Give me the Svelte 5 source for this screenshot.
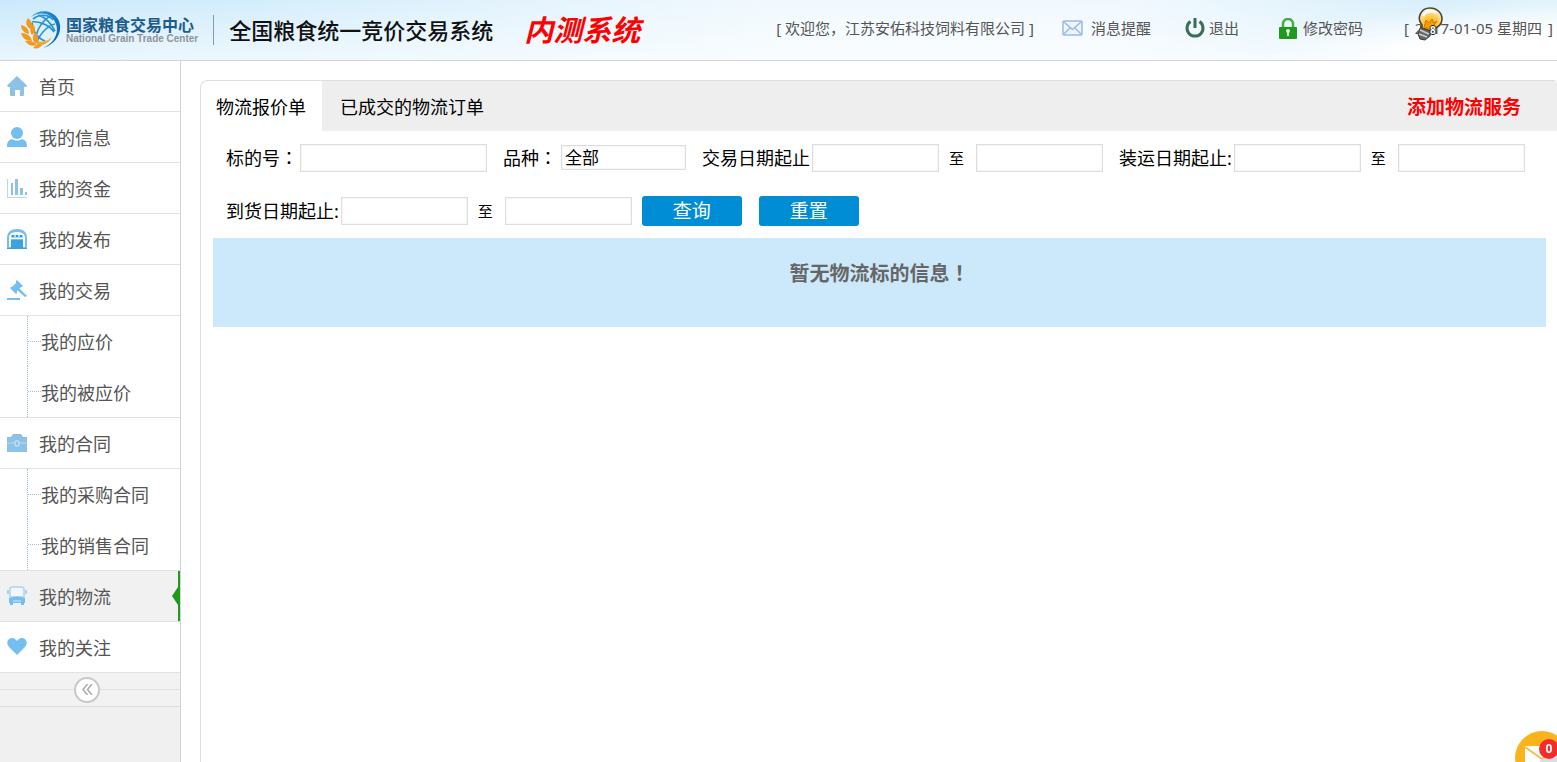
<script>
  let current = '我的物流';
  let tab = 0;
  let collapsed = false;
  let kind = '全部';

  const tabs = ['物流报价单', '已成交的物流订单'];
  const menu = [
    { name: '首页', icon: 'home' },
    { name: '我的信息', icon: 'user' },
    { name: '我的资金', icon: 'chart' },
    { name: '我的发布', icon: 'store' },
    { name: '我的交易', icon: 'gavel', children: ['我的应价', '我的被应价'] },
    { name: '我的合同', icon: 'bag', children: ['我的采购合同', '我的销售合同'] },
    { name: '我的物流', icon: 'bus' },
    { name: '我的关注', icon: 'heart' }
  ];

  const select = (name) => {
    current = name;
  }
</script>

<header>
  <a class="logo" href="#home">
    <svg width="42" height="40" viewBox="0 0 42 40">
      <defs>
        <linearGradient id="ring" x1="0" y1="0" x2="1" y2="1">
          <stop offset="0" stop-color="#2aa0dd" />
          <stop offset="1" stop-color="#0a5ca8" />
        </linearGradient>
      </defs>
      <path d="M11 7C18-1 32-1 38 9c6 11-1 25-15 29 12-5 17-17 12-26C31 3 20 1 11 7z" fill="url(#ring)" />
      <path d="M13 9c6-5 16-5 20 1M18 5c7 2 14 9 17 16M12 12c5-1 17 2 22 10M31 6c-7 3-14 12-15 22M35 14c-6 1-15 9-18 18M12 13c0 7 5 15 13 18" fill="none" stroke="#2a94d4" stroke-width="1.7" />
      <path d="M17 31c5 2 11 0 15-4-3 6-9 9-15 8z" fill="#f6a623" />
      <g fill="#f39a1c">
        <path d="M8 8c4 3 5 7 2 11C6 16 5 12 8 8z" />
        <path d="M1 15c5 1 8 4 8 9-5-1-8-4-8-9z" />
        <path d="M13 14c3 4 3 8-1 11-3-4-2-8 1-11z" />
        <path d="M1 23c6 0 10 3 11 8-6 0-10-3-11-8z" />
        <path d="M15 22c4 4 4 8 1 12-4-3-4-8-1-12z" />
        <path d="M5 31c5-1 9 0 12 4-5 2-9 0-12-4z" />
        <path d="M13 38c2-3 5-4 9-3-2 3-5 4-9 3z" />
      </g>
    </svg>
    <span class="brand">
      <b>国家粮食交易中心</b>
      <small>National Grain Trade Center</small>
    </span>
  </a>
  <h1>全国粮食统一竞价交易系统</h1>
  <em class="beta">内测系统</em>

  <div class="tools">
    <span>[ 欢迎您，江苏安佑科技饲料有限公司 ]</span>
    <a class="message" href="#message">
      <svg width="21" height="16" viewBox="0 0 21 16" fill="none" stroke="#9db9e6" stroke-width="1.5">
        <rect x="1" y="1" width="19" height="14" rx="1" fill="#eef5fe" />
        <path d="M2 2l8.500 7.500L19 2M2 14l6-6M19 14l-6-6" />
      </svg>
      消息提醒
    </a>
    <a class="logout" href="#logout">
      <svg width="20" height="20" viewBox="0 0 20 20" fill="none" stroke="#3b6e54" stroke-width="3">
        <path d="M5.500 3.500a8 8 0 1 0 9 0" />
        <path d="M10 0v10" />
      </svg>
      退出
    </a>
    <a class="password" href="#password">
      <svg width="18" height="21" viewBox="0 0 18 21">
        <path d="M4 10V6a5 5 0 0 1 10 0v4" fill="none" stroke="#43ad43" stroke-width="2.500" />
        <rect x="0" y="9" width="18" height="12" rx="1" fill="#1f9a1f" />
        <circle cx="9" cy="13" r="2" fill="#d9f3d4" />
        <path d="M8 13h2v5H8z" fill="#d9f3d4" />
      </svg>
      修改密码
    </a>
    <div class="date">
      <span>[</span>
      <span>2017-01-05 星期四</span>
      <span>]</span>
      <svg class="bulb" width="26" height="34" viewBox="0 0 26 34">
        <defs>
          <radialGradient id="glow" cx=".5" cy=".7" r=".7">
            <stop offset="0" stop-color="#ffb000" />
            <stop offset=".5" stop-color="#ffcb4d" />
            <stop offset="1" stop-color="#fff1dc" />
          </radialGradient>
        </defs>
        <path d="M4 19l10 4-1 6-5 4-5-1-2-5z" fill="#666" stroke="#3c3c3c" />
        <path d="M3 23l9 4M2 27l8 3" stroke="#ccc" stroke-width="1.500" />
        <path d="M13 1c7 0 12 5 12 11 0 5-4 9-8 9l-3 3-9-3V18C-1 11 4 1 13 1z" fill="url(#glow)" stroke="#4b4540" stroke-width="1.600" />
        <path d="M7 20l2-7 3 3 3-4 2 4 3-2-6 9z" fill="#f39b00" stroke="#ca6c00" stroke-width=".8" />
        <path d="M6 9c2-5 8-6 13-3" fill="none" stroke="#fff" stroke-width="2.500" />
      </svg>
      <span class="count">8</span>
    </div>
  </div>
</header>

<div class="page">
  <aside class:collapsed>
    <nav>
      <ul>
        {#each menu as item}
          <li>
            <a class="item" class:active={current === item.name} href="#menu" on:click={() => select(item.name)}>
              <svg width="20" height="20" viewBox="0 0 20 20" fill="#74bff0">
                {#if item.icon === 'home'}
                  <path d="M10 0l10 9.500-1 1.500h-2v8q0 1-1 1h-3v-6H8v6H4q-1 0-1-1v-8H1L0 9.500z" fill="#8dc1e5" />
                {:else if item.icon === 'user'}
                  <circle cx="10" cy="6" r="6" />
                  <path d="M0 20c0-6 2-7 5-8 3 2 7 2 10 0 3 1 5 2 5 8z" />
                {:else if item.icon === 'chart'}
                  <path d="M0 1h1v18h19v1H0z" fill="#b8d9ec" />
                  <path d="M4 5h2v12H4zM8 1h3v16H8zM13 10h3v7h-3zM18 14h2v3h-2z" fill="#8dc1e5" />
                {:else if item.icon === 'store'}
                  <path d="M0 20V9C0 3 4 0 10 0s10 3 10 9v11z" />
                  <path d="M2 18V9c0-4 3-6 8-6s8 2 8 6v9h-2v-8H4v8z" fill="#fff" />
                  <path d="M4 6h12v3H4z" fill="#a9d9f7" />
                  <path d="M5 6h2v2H5zM9 6h2v2H9zM13 6h2v2h-2z" fill="#259ada" />
                  <path d="M4 11h12v8H4zM0 19h20v1H0z" fill="#3ca3de" />
                {:else if item.icon === 'gavel'}
                  <path d="M10 0l6 6-1 1-1 0-4 4v2l-1 1-6-6 1-1h1l4-4V1z" />
                  <path d="M12 8l8 8-2 1-8-7zM0 18h13v2H0z" />
                {:else if item.icon === 'bag'}
                  <path d="M0 4h4l2-3h8l2 3h4v15H0z" fill="#8dc1e5" />
                  <path d="M0 10h7M13 10h7" stroke="#b9daf0" />
                  <rect x="8" y="8" width="4" height="5" rx="1" fill="none" stroke="#dceefa" />
                {:else if item.icon === 'bus'}
                  <path d="M3 3q0-2 3-2h8q3 0 3 2v8H3z" fill="#f1f7fc" stroke="#a9d4ef" stroke-width="1.500" />
                  <path d="M1 4v4M19 4v4" stroke="#a9d4ef" stroke-width="2" />
                  <path d="M2 12q8-3 16 0v5h-1v2h-3v-2H6v2H3v-2H2z" />
                  <path d="M6 15h8" stroke="#d1eafa" />
                {:else}
                  <path d="M10 18L2 10C-2 5 2 1 5 1c3 0 4 2 5 3 1-1 2-3 5-3 3 0 7 4 3 9z" />
                {/if}
              </svg>
              <span>{item.name}</span>
            </a>
            {#if item.children}
              <ul class="sub">
                {#each item.children as child}
                  <li><a href="#menu" on:click={() => select(child)}>{child}</a></li>
                {/each}
              </ul>
            {/if}
          </li>
        {/each}
      </ul>
    </nav>
    <div class="fold">
      <button aria-label="收起菜单" on:click={() => collapsed = !collapsed}>
        <svg width="11" height="11" viewBox="0 0 11 11" fill="none" stroke="#aaa" stroke-width="1.500">
          <path d="M5.500 0L1 5.500 5.500 11M10 0L5.500 5.500 10 11" />
        </svg>
      </button>
    </div>
  </aside>

  <main>
    <div class="tabs">
      {#each tabs as name, i}
        <button class:on={tab === i} on:click={() => tab = i}>{name}</button>
      {/each}
      <a class="add" href="#add">添加物流服务</a>
    </div>
    <div class="content">
      <form on:submit|preventDefault>
        <div class="row">
          <div class="field">
            <label for="code">标的号<span class="mark">：</span></label>
            <input id="code" class="wide" type="text" />
          </div>
          <div class="field kind">
            <label for="kind">品种<span class="mark">：</span></label>
            <select id="kind" bind:value={kind}>
              <option>全部</option>
            </select>
          </div>
          <div class="field">
            <label for="trade">交易日期起止</label>
            <input id="trade" type="text" />
            <label class="to" for="tradeEnd">至</label>
            <input id="tradeEnd" type="text" />
          </div>
          <div class="field">
            <label for="ship">装运日期起止:</label>
            <input id="ship" type="text" />
            <label class="to" for="shipEnd">至</label>
            <input id="shipEnd" type="text" />
          </div>
        </div>
        <div class="row last">
          <div class="field">
            <label for="arrive">到货日期起止:</label>
            <input id="arrive" type="text" />
            <label class="to" for="arriveEnd">至</label>
            <input id="arriveEnd" type="text" />
          </div>
          <div class="actions">
            <button type="submit">查询</button>
            <button type="reset">重置</button>
          </div>
        </div>
      </form>
      <p class="empty">暂无物流标的信息<span class="mark">！</span></p>
    </div>
  </main>
</div>

<button class="mail" aria-label="消息">
  <svg width="54" height="54" viewBox="0 0 54 54">
    <circle cx="27" cy="27" r="27" fill="#fbb31c" />
    <path d="M10 15h34v22H10z" fill="#fff" />
    <path d="M10 16l17 12 17-12" fill="none" stroke="#f3bd50" stroke-width="2" />
    <path d="M25 30l4-3h15v10H25z" fill="#ddd" />
  </svg>
  <span>0</span>
</button>

<style>
:global(body) {
  margin: 0;
  background-color: #FFF;
}
:global(#app) {
  display: flex;
  flex-direction: column;
  min-height: 100vh;
  font-family: "Noto Sans", "Noto Sans CJK SC", sans-serif;
  font-size: 18px;
  color: #000;
}
a {
  color: inherit;
  text-decoration: none;
}
ul {
  list-style: none;
  margin: 0;
  padding: 0;
}
button, input, select {
  font-family: inherit;
  box-sizing: border-box;
}
button {
  cursor: pointer;
}
svg {
  flex-shrink: 0;
}
/* full-width punctuation centred in its box */
.mark {
  font-family: "Noto Sans CJK TC", sans-serif;
}
header {
  display: flex;
  align-items: center;
  height: 60px;
  padding: 0 4px 0 20px;
  border-bottom: 1px solid #d0d5da;
  background:
    radial-gradient(ellipse 300px 55px at 100% 100%, #fff 50%, rgba(255,255,255,0)),
    linear-gradient(to bottom, rgba(255,255,255,0), rgba(255,255,255,.6)),
    linear-gradient(to right, #cbe9fc 0%, #d3edfc 15%, #e2f3fd 32%, #f1f9fe 50%, #f1f9ff 72%, #d9effb 92%, #e4f4fc 100%);
  white-space: nowrap;
}
.logo {
  display: flex;
  align-items: center;
  gap: 4px;
  padding-right: 15px;
}
.brand {
  display: flex;
  flex-direction: column;
}
.brand b {
  font-size: 16px;
  line-height: 18px;
  color: #1c5c8c;
}
.brand small {
  font-family: "Liberation Sans", sans-serif;
  font-size: 10px;
  font-weight: 700;
  line-height: 10px;
  color: #8d9499;
}
h1 {
  margin: 0;
  padding-left: 15px;
  border-left: 1px solid #8e9aa3;
  font-size: 22px;
  font-weight: 500;
  line-height: 30px;
  color: #111;
}
.beta {
  padding-left: 31px;
  font-size: 29px;
  font-weight: 700;
  line-height: 30px;
  color: #F00;
}
.tools {
  display: flex;
  align-items: center;
  margin-left: auto;
  padding-bottom: 4px;
  font-size: 15px;
  line-height: 20px;
  color: #555;
}
.tools a {
  display: flex;
  align-items: center;
}
.message {
  gap: 8px;
  margin-left: 28px;
}
.logout {
  gap: 4px;
  margin-left: 34px;
}
.password {
  gap: 6px;
  margin-left: 40px;
}
.date {
  position: relative;
  display: flex;
  gap: 6px;
  margin-left: 41px;
}
.bulb {
  position: absolute;
  left: 13px;
  top: -11px;
}
.count {
  position: absolute;
  left: 26px;
  top: 5px;
  font-size: 10px;
  font-weight: 700;
  line-height: 14px;
  color: #FFF;
  text-shadow: 1px 0 #222, -1px 0 #222, 0 1px #222, 0 -1px #222;
}
.page {
  display: flex;
  flex: 1;
}
aside {
  width: 180px;
  flex-shrink: 0;
  border-right: 1px solid #d0d5da;
  background-color: #f0f0f0;
  color: #555;
}
nav {
  background-color: #FFF;
}
.item {
  position: relative;
  display: flex;
  align-items: center;
  gap: 12px;
  height: 50px;
  padding-left: 7px;
  border-bottom: 1px solid #e0e2e4;
}
.item.active {
  background-color: #f1f1f1;
}
.item.active:before {
  content: '';
  position: absolute;
  right: 0;
  top: 0;
  bottom: 0;
  width: 2px;
  background-color: #1f9a1f;
}
.item.active:after {
  content: '';
  position: absolute;
  right: 2px;
  top: 16px;
  border: 9px solid transparent;
  border-left-width: 0;
  border-right: 6px solid #1f9a1f;
}
.sub {
  padding-left: 27px;
  border-bottom: 1px solid #e0e2e4;
}
.sub li {
  display: flex;
  align-items: center;
  height: 50px;
  border-left: 1px dotted #9cc3de;
}
.sub li:last-child {
  height: 51px;
}
.sub li:before {
  content: '';
  width: 13px;
  border-top: 1px dotted #9cc3de;
}
.collapsed {
  width: 34px;
}
.collapsed .item span, .collapsed .sub {
  display: none;
}
.fold {
  display: flex;
  justify-content: center;
  align-items: center;
  height: 33px;
  padding-right: 6px;
  border-bottom: 1px solid #dcdcdc;
  background: linear-gradient(#e2e2e2, #e2e2e2) 0 16px / 100% 1px no-repeat #f2f2f2;
}
.fold button {
  display: flex;
  justify-content: center;
  align-items: center;
  width: 26px;
  height: 26px;
  padding: 0;
  border: 2px solid #c8c8c8;
  border-radius: 50%;
  background-color: #FFF;
}
main {
  flex: 1;
  min-width: 0;
  margin: 19px 0 0 19px;
  border: 1px solid #ddd;
  border-width: 1px 0 0 1px;
  border-radius: 8px 4px 0 0;
}
.tabs {
  display: flex;
  align-items: center;
  height: 50px;
  padding-right: 36px;
  border-radius: 7px 3px 0 0;
  background-color: #eee;
}
.tabs button {
  height: 50px;
  padding: 0 18px;
  border: 0;
  background: none;
  font-size: 18px;
  color: #000;
}
.tabs button.on {
  padding: 0 16px 0 15px;
  border-radius: 7px 0 0 0;
  background-color: #FFF;
}
.add {
  margin-left: auto;
  font-size: 19px;
  font-weight: 700;
  color: #F00;
}
.content {
  padding: 12px 11px 0 12px;
}
form {
  padding-left: 13px;
}
.row {
  display: flex;
  flex-wrap: wrap;
  align-items: center;
  gap: 12px 16px;
  margin-bottom: 24px;
}
.row.last {
  column-gap: 10px;
  margin-bottom: 12px;
}
.field {
  display: flex;
  align-items: center;
  gap: 2px;
}
.field.kind {
  gap: 4px;
}
.field label {
  line-height: 28px;
  white-space: nowrap;
}
.field .to {
  padding: 0 10px 0 8px;
  font-size: 15px;
}
input {
  width: 127px;
  height: 28px;
  padding: 0 4px;
  border: 1px solid #ddd;
  box-shadow: inset 0 0 2px #e4e4e4;
  background-color: #FFF;
  font-size: 16px;
}
.wide {
  width: 187px;
}
select {
  appearance: none;
  width: 125px;
  height: 25px;
  padding: 0 3px;
  border: 1px solid #ddd;
  border-radius: 0;
  box-shadow: inset 0 0 2px #e4e4e4;
  background-color: #FFF;
  font-size: 17px;
  line-height: 22px;
  color: #000;
}
.actions {
  display: flex;
  gap: 17px;
}
.actions button {
  width: 100px;
  height: 30px;
  padding: 0;
  border: 0;
  border-radius: 3px;
  background-color: #008dd5;
  font-size: 19px;
  line-height: 30px;
  color: #FFF;
}
.empty {
  margin: 0;
  padding: 20px 0 38px;
  background-color: #cce9fc;
  font-size: 20px;
  font-weight: 700;
  line-height: 30px;
  text-align: center;
  color: #666;
}
.mail {
  position: fixed;
  right: -12px;
  bottom: -23px;
  width: 54px;
  height: 54px;
  padding: 0;
  border: 0;
  background: none;
}
.mail span {
  position: absolute;
  left: 24px;
  top: 8px;
  width: 20px;
  border-radius: 50%;
  background-color: #fb2a2a;
  font-size: 12px;
  font-weight: 700;
  line-height: 20px;
  color: #FFF;
}
</style>
